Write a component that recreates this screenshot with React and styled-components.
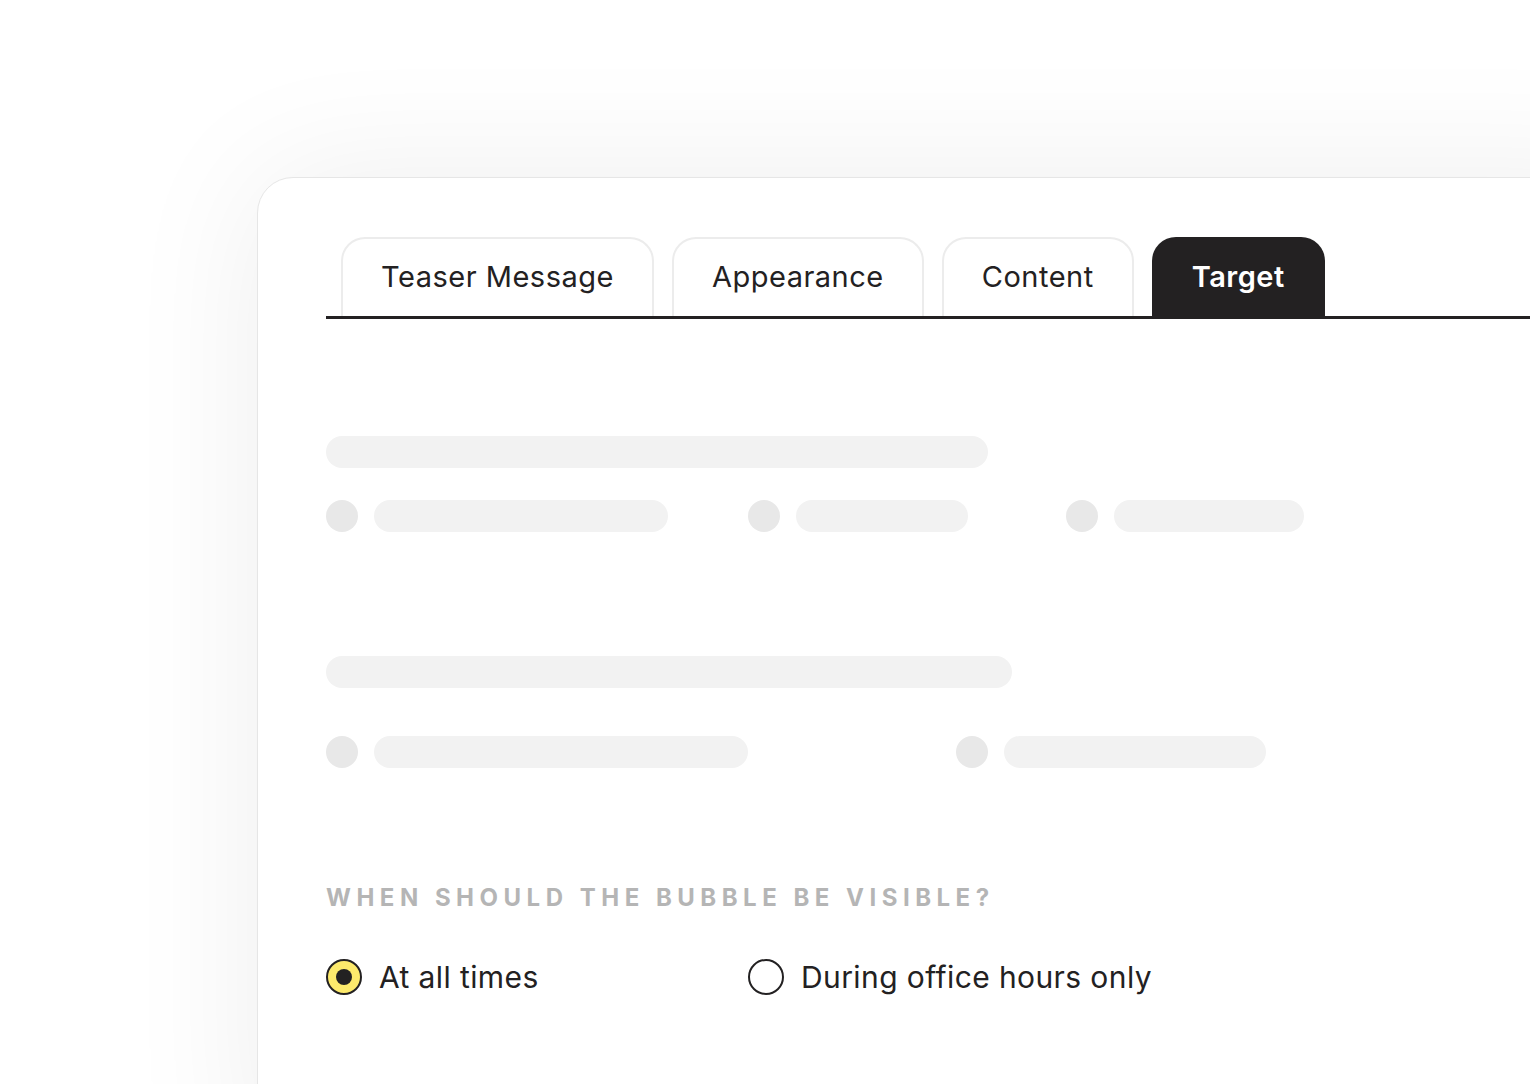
import React from 'react';
import styled, { createGlobalStyle } from 'styled-components';

const GlobalStyle = createGlobalStyle`
  html, body {
    margin: 0;
    padding: 0;
    background: #fff;
    overflow: hidden;
  }
  body {
    font-family: Inter, "Noto Sans", sans-serif;
    color: #232122;
  }
`

const Page = styled.div`
  width: 1530px;
  height: 1084px;
  padding: 177px 0 0 257px;
  box-sizing: border-box;
  overflow: hidden;
`

const Card = styled.div`
  width: 1400px;
  height: 1000px;
  box-sizing: border-box;
  background: #fff;
  border: 1px solid #e6e6e6;
  border-radius: 36px;
  box-shadow: 0 0 140px rgba(0, 0, 0, 0.07);
  padding: 59px 0 0 68px;
`

const TabBar = styled.div`
  display: flex;
  gap: 18px;
  border-bottom: 3px solid #232122;
  padding-left: 15px;
`

const Tab = styled.div`
  height: 79px;
  box-sizing: border-box;
  padding: 0 38px 3px;
  display: flex;
  align-items: center;
  font-size: 29px;
  letter-spacing: 0.5px;
  border-radius: 24px 24px 0 0;
  border: 2px solid ${p => (p.active ? '#232122' : '#ececec')};
  border-bottom: none;
  background: ${p => (p.active ? '#232122' : '#fff')};
  color: ${p => (p.active ? '#fff' : '#232122')};
  font-weight: ${p => (p.active ? 600 : 400)};
`

const Body = styled.div`
  display: flex;
  flex-direction: column;
  padding-top: 117px;
`

const Group = styled.div`
  display: flex;
  flex-direction: column;
  gap: ${p => p.gap}px;
  margin-bottom: ${p => p.mb || 0}px;
`

const Bar = styled.div`
  height: 32px;
  width: ${p => p.w}px;
  border-radius: 16px;
  background: #f2f2f2;
`

const Row = styled.div`
  display: flex;
  align-items: center;
`

const Option = styled.div`
  display: flex;
  align-items: center;
  gap: 16px;
  width: ${p => p.w || 'auto'};
`

const Dot = styled.div`
  width: 32px;
  height: 32px;
  border-radius: 50%;
  background: #e8e8e8;
  flex-shrink: 0;
`

const Label = styled.div`
  font-size: 24px;
  font-weight: 700;
  letter-spacing: 5.5px;
  color: #b5b5b5;
  text-transform: uppercase;
  margin-bottom: 47px;
`

const Radio = styled.span`
  width: 36px;
  height: 36px;
  box-sizing: border-box;
  border-radius: 50%;
  border: 2px solid #232122;
  background: ${p => (p.checked ? '#fdea6c' : '#fff')};
  display: flex;
  align-items: center;
  justify-content: center;
  flex-shrink: 0;

  &::after {
    content: '';
    display: ${p => (p.checked ? 'block' : 'none')};
    width: 16px;
    height: 16px;
    border-radius: 50%;
    background: #232122;
  }
`

const RadioText = styled.span`
  font-size: 30px;
  letter-spacing: 0.4px;
  color: #232122;
`

const RadioOption = styled.label`
  display: flex;
  align-items: center;
  gap: 17px;
  width: ${p => p.w || 'auto'};
`

const tabs = ['Teaser Message', 'Appearance', 'Content', 'Target'];

export default function App() {
  return (
    <>
      <GlobalStyle />
      <Page>
        <Card>
          <TabBar>
            {tabs.map(t => (
              <Tab key={t} active={t === 'Target'}>{t}</Tab>
            ))}
          </TabBar>
          <Body>
            <Group gap={32} mb={124}>
              <Bar w={662} />
              <Row>
                <Option w="422px"><Dot /><Bar w={294} /></Option>
                <Option w="318px"><Dot /><Bar w={172} /></Option>
                <Option><Dot /><Bar w={190} /></Option>
              </Row>
            </Group>
            <Group gap={48} mb={115}>
              <Bar w={686} />
              <Row>
                <Option w="630px"><Dot /><Bar w={374} /></Option>
                <Option><Dot /><Bar w={262} /></Option>
              </Row>
            </Group>
            <Label>When should the bubble be visible?</Label>
            <Row>
              <RadioOption w="422px">
                <Radio checked />
                <RadioText>At all times</RadioText>
              </RadioOption>
              <RadioOption>
                <Radio />
                <RadioText>During office hours only</RadioText>
              </RadioOption>
            </Row>
          </Body>
        </Card>
      </Page>
    </>
  );
}
